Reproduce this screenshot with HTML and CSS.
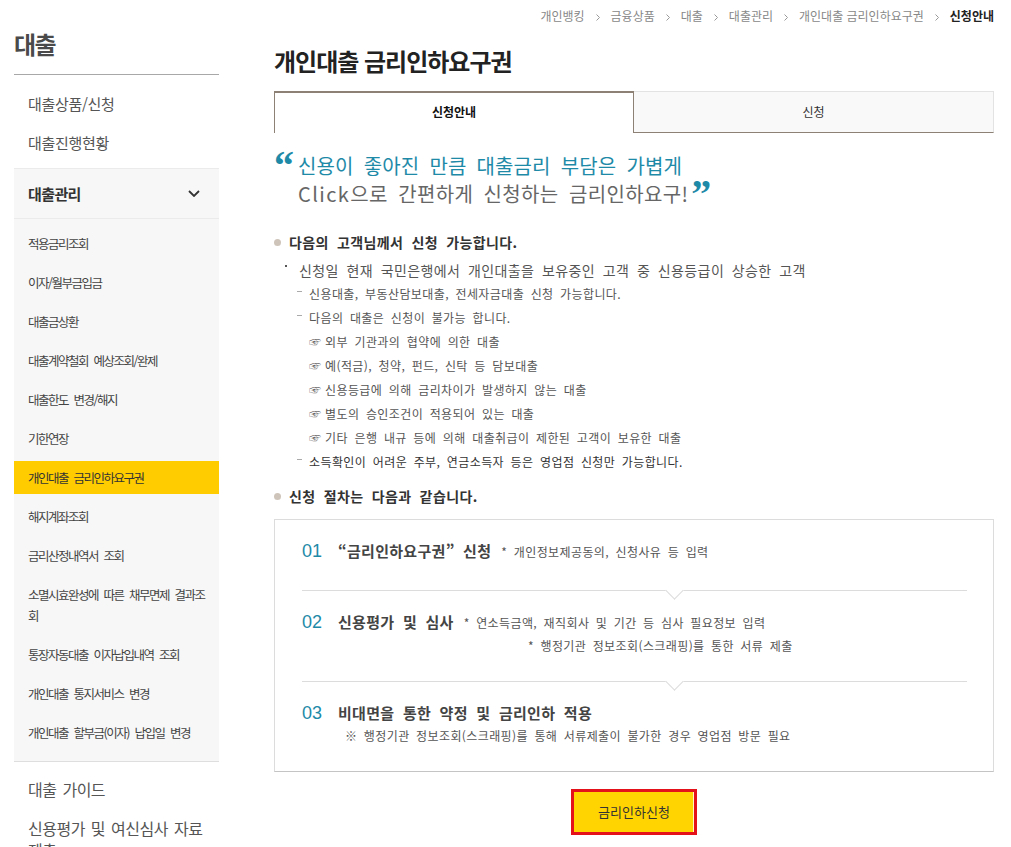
FILE: index.html
```html
<!DOCTYPE html>
<html lang="ko">
<head>
<meta charset="utf-8">
<title>개인대출 금리인하요구권</title>
<link rel="stylesheet" href="styles.css">
</head>
<body>
<div class="page">
  <aside class="side">
    <h2 class="side-title">대출</h2>
    <ul class="side-menu">
      <li>대출상품/신청</li>
      <li>대출진행현황</li>
    </ul>
    <div class="side-group">
      <div class="side-group-head">
        <span>대출관리</span>
        <svg class="chev" width="12" height="7" viewBox="0 0 12 7"><path d="M1 1l5 5 5-5" fill="none" stroke="#333" stroke-width="1.8"/></svg>
      </div>
      <ul class="side-sub">
        <li>적용금리조회</li>
        <li>이자/월부금입금</li>
        <li>대출금상환</li>
        <li>대출계약철회 예상조회/완제</li>
        <li>대출한도 변경/해지</li>
        <li>기한연장</li>
        <li class="on">개인대출 금리인하요구권</li>
        <li>해지계좌조회</li>
        <li>금리산정내역서 조회</li>
        <li>소멸시효완성에 따른 채무면제 결과조<br>회</li>
        <li>통장자동대출 이자납입내역 조회</li>
        <li>개인대출 통지서비스 변경</li>
        <li>개인대출 할부금(이자) 납입일 변경</li>
      </ul>
    </div>
    <ul class="side-menu bottom">
      <li>대출 가이드</li>
      <li>신용평가 및 여신심사 자료<br>제출</li>
    </ul>
  </aside>

  <main class="main">
    <nav class="crumbs">
      <span>개인뱅킹</span><svg class="sep" width="4" height="7" viewBox="0 0 4 7"><path d="M0.5 0.5l3 3-3 3" fill="none" stroke="#999" stroke-width="1"/></svg><span>금융상품</span><svg class="sep" width="4" height="7" viewBox="0 0 4 7"><path d="M0.5 0.5l3 3-3 3" fill="none" stroke="#999" stroke-width="1"/></svg><span>대출</span><svg class="sep" width="4" height="7" viewBox="0 0 4 7"><path d="M0.5 0.5l3 3-3 3" fill="none" stroke="#999" stroke-width="1"/></svg><span>대출관리</span><svg class="sep" width="4" height="7" viewBox="0 0 4 7"><path d="M0.5 0.5l3 3-3 3" fill="none" stroke="#999" stroke-width="1"/></svg><span>개인대출 금리인하요구권</span><svg class="sep" width="4" height="7" viewBox="0 0 4 7"><path d="M0.5 0.5l3 3-3 3" fill="none" stroke="#999" stroke-width="1"/></svg><span class="cur">신청안내</span>
    </nav>

    <h1 class="title">개인대출 금리인하요구권</h1>

    <div class="tabs">
      <div class="tab on">신청안내</div>
      <div class="tab off">신청</div>
    </div>

    <div class="quote">
      <div class="l1"><span class="qm open">“</span>신용이 좋아진 만큼 대출금리 부담은 가볍게</div>
      <div class="l2"><span class="latin">Click</span>으로 간편하게 신청하는 금리인하요구!<span class="qm close">”</span></div>
    </div>

    <div class="info">
      <h3 class="sec">다음의 고객님께서 신청 가능합니다.</h3>
      <p class="li li-dot">신청일 현재 국민은행에서 개인대출을 보유중인 고객 중 신용등급이 상승한 고객</p>
      <p class="li li-dash">신용대출, 부동산담보대출, 전세자금대출 신청 가능합니다.</p>
      <p class="li li-dash">다음의 대출은 신청이 불가능 합니다.</p>
      <p class="li li-hand">외부 기관과의 협약에 의한 대출</p>
      <p class="li li-hand">예(적금), 청약, 펀드, 신탁 등 담보대출</p>
      <p class="li li-hand">신용등급에 의해 금리차이가 발생하지 않는 대출</p>
      <p class="li li-hand">별도의 승인조건이 적용되어 있는 대출</p>
      <p class="li li-hand">기타 은행 내규 등에 의해 대출취급이 제한된 고객이 보유한 대출</p>
      <p class="li li-dash strong">소득확인이 어려운 주부, 연금소득자 등은 영업점 신청만 가능합니다.</p>
      <h3 class="sec sec2">신청 절차는 다음과 같습니다.</h3>
    </div>

    <div class="steps">
      <div class="step">
        <div class="step-head">
          <span class="num">01</span>
          <span class="step-title">“금리인하요구권” 신청</span>
          <span class="step-note">* 개인정보제공동의, 신청사유 등 입력</span>
        </div>
      </div>
      <div class="step has-sub">
        <div class="step-head">
          <span class="num">02</span>
          <span class="step-title">신용평가 및 심사</span>
          <span class="step-note">* 연소득금액, 재직회사 및 기간 등 심사 필요정보 입력</span>
        </div>
        <p class="step-sub s2">* 행정기관 정보조회(스크래핑)를 통한 서류 제출</p>
      </div>
      <div class="step has-sub">
        <div class="step-head">
          <span class="num">03</span>
          <span class="step-title">비대면을 통한 약정 및 금리인하 적용</span>
        </div>
        <p class="step-sub s3">※ 행정기관 정보조회(스크래핑)를 통해 서류제출이 불가한 경우 영업점 방문 필요</p>
      </div>
    </div>

    <div class="btn-wrap">
      <a class="btn" href="#">금리인하신청</a>
    </div>
  </main>
</div>
</body>
</html>
```

FILE: styles.css
```css
*, *::before, *::after { box-sizing: border-box; }
html, body { margin: 0; padding: 0; }
body {
  font-family: "Noto Sans CJK KR", "Noto Sans", sans-serif;
  color: #333;
  background: #fff;
}
ul { list-style: none; margin: 0; padding: 0; }
p, h1, h2, h3 { margin: 0; font-weight: normal; }

.page { display: flex; padding-left: 14px; }

/* sidebar */
.side { width: 205px; flex: none; }
.side-title {
  font-size: 24px;
  line-height: 36px;
  font-weight: 700;
  color: #4a4a4a;
  letter-spacing: -1.5px;
  padding: 26px 0 12px;
  border-bottom: 1px solid #a8a8a8;
}
.side-menu { padding: 10px 0 5px; }
.side-menu li {
  font-size: 15px;
  line-height: 22px;
  padding: 8px 14px 9px;
  color: #555;
  letter-spacing: -0.3px;
  word-spacing: 1px;
}
.side-menu.bottom { padding: 8px 0 0; }
.side-menu.bottom li { font-size: 16px; letter-spacing: -0.5px; word-spacing: 2px; }
.side-group {
  background: #f7f7f7;
  border-top: 1px solid #ebebeb;
  border-bottom: 1px solid #dedede;
}
.side-group-head {
  display: flex;
  justify-content: space-between;
  align-items: center;
  height: 50px;
  padding: 0 19px 0 14px;
  border-bottom: 1px solid #ebebeb;
  font-size: 15px;
  font-weight: 700;
  color: #333;
  letter-spacing: -0.6px;
}
.side-sub {
  display: flex;
  flex-direction: column;
  gap: 6px;
  padding: 8px 0 12px;
}
.side-sub li {
  font-size: 12.5px;
  line-height: 21px;
  padding: 6px 8px 6px 14px;
  color: #444;
  letter-spacing: -1.5px;
  word-spacing: 3.5px;
  white-space: nowrap;
}
.side-sub li.on { background: #ffcc00; color: #333; }

/* main */
.main { width: 720px; margin-left: 55px; flex: none; }

.crumbs {
  height: 32px;
  line-height: 32px;
  text-align: right;
  font-size: 12px;
  color: #888;
}
.crumbs .sep { display: inline-block; margin: 0 11px; vertical-align: 0; }
.crumbs .cur { font-weight: 700; color: #222; }

.title {
  font-size: 24px;
  line-height: 34px;
  font-weight: 700;
  color: #222;
  letter-spacing: -1px;
  margin: 12px 0 13px;
}

.tabs { display: flex; height: 42px; }
.tab { width: 50%; text-align: center; font-size: 12px; color: #333; }
.tab.on {
  border: 1px solid #8d8176;
  border-top-width: 2px;
  border-bottom: 0;
  background: #fff;
  font-weight: 700;
  color: #111;
  line-height: 38px;
}
.tab.off {
  background: #f9f9f9;
  border-top: 1px solid #e3e3e3;
  border-right: 1px solid #e3e3e3;
  border-bottom: 1px solid #8d8176;
  line-height: 40px;
}

.quote {
  margin-top: 19px;
  padding-left: 24px;
  font-size: 20px;
  line-height: 28px;
  letter-spacing: 0.1px;
  word-spacing: 4.5px;
}
.quote .l1 { color: #1e8aa8; }
.quote .l2 { color: #666; letter-spacing: 0.35px; }
.quote .latin { letter-spacing: 1.4px; }
.qm {
  display: inline-block;
  vertical-align: top;
  font-family: "Liberation Serif", serif;
  font-weight: 700;
  font-size: 40px;
  line-height: 28px;
  letter-spacing: 0;
  color: #1e8aa8;
}
.qm.open { width: 24px; margin-left: -24px; }
.qm.close { margin-left: 3px; }

.info { margin-top: 22px; }
.sec {
  font-size: 14px;
  font-weight: 700;
  line-height: 24px;
  color: #333;
  letter-spacing: 0.4px;
  word-spacing: 3.8px;
}
.sec::before {
  content: "";
  display: inline-block;
  width: 7px;
  height: 7px;
  border-radius: 50%;
  background: #cfc4ba;
  margin: 0 8px 0 0;
  vertical-align: 2px;
}
.sec2 { margin-top: 10px; }

.li { line-height: 24px; }
.li-dot { font-size: 14px; color: #555; letter-spacing: 0.4px; word-spacing: 3.3px; margin-top: 4px; }
.li-dot::before {
  content: "";
  display: inline-block;
  width: 2px;
  height: 2px;
  background: #555;
  margin: 0 12px 0 11px;
  vertical-align: 9px;
}
.li-dash { font-size: 12px; color: #555; letter-spacing: 0.4px; word-spacing: 2.8px; }
.li-dash::before {
  content: "";
  display: inline-block;
  width: 5px;
  height: 1px;
  background: #aaa;
  margin: 0 7px 0 23px;
  vertical-align: 7px;
}
.li-dash.strong { color: #333; }
.li-hand { font-size: 12px; color: #555; letter-spacing: 0.4px; word-spacing: 2.8px; }
.li-hand::before {
  content: "☞";
  display: inline-block;
  vertical-align: top;
  line-height: 24px;
  font-family: "Noto Sans CJK KR", sans-serif;
  font-size: 12px;
  color: #666;
  letter-spacing: 0;
  margin: 0 4px 0 35px;
}

.steps {
  margin-top: 11px;
  border: 1px solid #dcdcdc;
  border-bottom-color: #c4c4c4;
  padding: 0 26px 0 27px;
}
.step { position: relative; padding: 19px 0 26px; }
.step.has-sub { padding-bottom: 24px; }
.step + .step { border-top: 1px solid #dcdcdc; }
.step + .step::before {
  content: "";
  position: absolute;
  left: 366px;
  top: -7px;
  width: 13px;
  height: 13px;
  background: #fff;
  border-right: 1px solid #dcdcdc;
  border-bottom: 1px solid #dcdcdc;
  transform: rotate(45deg);
}
.step-head { display: flex; align-items: baseline; line-height: 24px; }
.num {
  font-family: "Liberation Sans", Arial, sans-serif;
  font-size: 18px;
  color: #1e8aa8;
  width: 36px;
  flex: none;
}
.step-title { font-size: 15px; font-weight: 700; color: #444; letter-spacing: 0.3px; word-spacing: 4px; }
.step-note { font-size: 12px; color: #555; letter-spacing: 0.4px; word-spacing: 2.7px; margin-left: 10px; }
.step-sub { font-size: 12px; color: #555; letter-spacing: 0.4px; word-spacing: 2.7px; line-height: 22px; }
.step-sub.s2 { padding-left: 226px; }
.step-sub.s3 { padding-left: 43px; }

.btn-wrap { margin-top: 17px; text-align: center; }
.btn {
  display: inline-block;
  width: 126px;
  height: 46px;
  border: 3px solid #e5111a;
  background: #ffd400;
  font-size: 13px;
  color: #333;
  line-height: 40px;
  text-decoration: none;
  box-shadow: inset -1px 0 0 #fff6c0;
}
```
